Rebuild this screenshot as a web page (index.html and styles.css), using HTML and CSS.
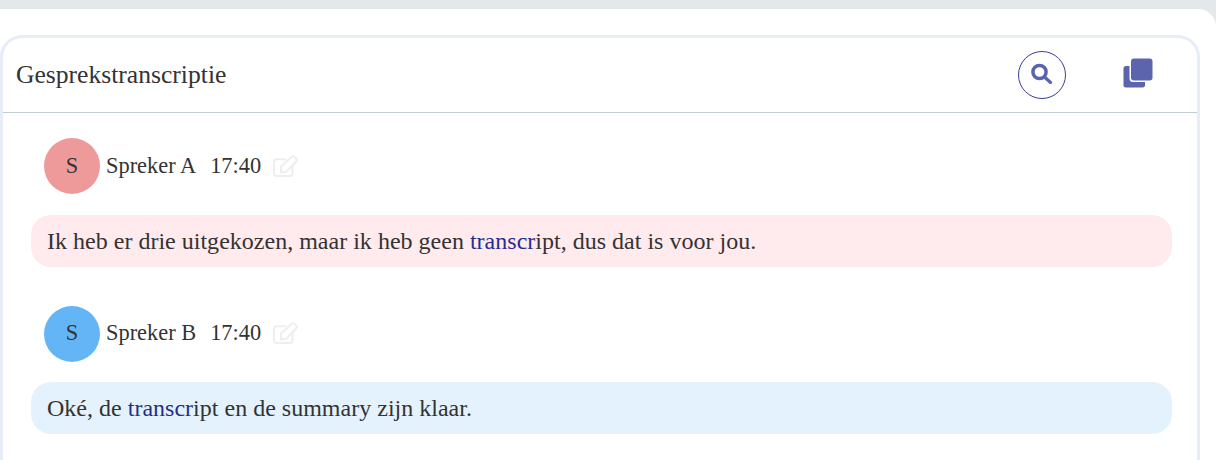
FILE: index.html
```html
<!DOCTYPE html>
<html lang="nl">
<head>
<meta charset="utf-8">
<title>Gesprekstranscriptie</title>
<link rel="stylesheet" href="styles.css">
</head>
<body>
<div class="sheet">
  <section class="card">
    <header class="card-head">
      <h2 class="title">Gesprekstranscriptie</h2>
      <div class="tools">
        <button class="search-btn" aria-label="Zoeken">
          <svg width="22" height="22" viewBox="0 0 22 22"><circle cx="8.500" cy="10" r="6.600" fill="none" stroke="#5b64ac" stroke-width="3.500"/><path d="M13.500 15l6 5.500" stroke="#5b64ac" stroke-width="3.200" stroke-linecap="round"/></svg>
        </button>
        <svg class="copy" width="30" height="30" viewBox="0 0 30 30"><path d="M3 8h3.500v12.500a3.500 3.500 0 0 0 3.500 3.500h12v3a2.500 2.500 0 0 1-2.500 2.500H3A2.500 2.500 0 0 1 .5 27V10.500A2.500 2.500 0 0 1 3 8z" fill="#5b64ac"/><rect x="8" y=".5" width="21.500" height="22" rx="3" fill="#5b64ac"/></svg>
      </div>
    </header>
    <div class="messages">
      <article class="msg">
        <div class="meta">
          <span class="avatar avatar-a">S</span>
          <span class="name">Spreker A</span>
          <span class="time">17:40</span>
          <svg class="edit" width="26" height="22" viewBox="0 0 26 22"><path d="M13 4.300H3.500A2.500 2.500 0 0 0 1 6.800V18.500A2.500 2.500 0 0 0 3.500 21h13.500a2.500 2.500 0 0 0 2.500-2.500V11" fill="none" stroke="#eeeeee" stroke-width="2"/><path d="M8 11.500L19 1.500q1-.8 2 0l2.500 2.500q.8 1 0 2L13 17l-5 .5z" fill="none" stroke="#eeeeee" stroke-width="2" stroke-linejoin="round"/></svg>
        </div>
        <p class="bubble bubble-a">Ik heb er drie uitgekozen, maar ik heb geen <span class="hit">transcr</span>ipt, dus dat is voor jou.</p>
      </article>
      <article class="msg">
        <div class="meta">
          <span class="avatar avatar-b">S</span>
          <span class="name">Spreker B</span>
          <span class="time">17:40</span>
          <svg class="edit" width="26" height="22" viewBox="0 0 26 22"><path d="M13 4.300H3.500A2.500 2.500 0 0 0 1 6.800V18.500A2.500 2.500 0 0 0 3.500 21h13.500a2.500 2.500 0 0 0 2.500-2.500V11" fill="none" stroke="#eeeeee" stroke-width="2"/><path d="M8 11.500L19 1.500q1-.8 2 0l2.500 2.500q.8 1 0 2L13 17l-5 .5z" fill="none" stroke="#eeeeee" stroke-width="2" stroke-linejoin="round"/></svg>
        </div>
        <p class="bubble bubble-b">Oké, de <span class="hit">transcr</span>ipt en de summary zijn klaar.</p>
      </article>
    </div>
  </section>
</div>
</body>
</html>
```
FILE: styles.css
```css
* { box-sizing: border-box; }
html, body { margin: 0; height: 460px; overflow: hidden; }
body {
  background: #e3e8ea;
  padding-top: 9px;
  font-family: "Liberation Serif", serif;
  color: #333;
}
.sheet {
  height: 451px;
  background: #fff;
  border-radius: 0 18px 0 0;
  padding: 26px 16px 0 0;
}
.card {
  height: 425px;
  border: 3px solid #e6ecf8;
  border-bottom: 0;
  border-radius: 22px 22px 0 0;
}
.card-head {
  height: 75px;
  display: flex;
  align-items: center;
  justify-content: space-between;
  padding: 0 44px 0 13px;
  border-bottom: 1px solid #c2cdd1;
}
.title { margin: 0; font-size: 25.6px; font-weight: 400; }
.tools { display: flex; align-items: center; gap: 57px; }
.search-btn {
  width: 48px;
  height: 48px;
  border: 1px solid #3a3f96;
  border-radius: 50%;
  background: #fff;
  padding: 0 0 4px;
  display: flex;
  align-items: center;
  justify-content: center;
}
.copy { margin-bottom: 4px; }
.messages { padding: 25px 25px 0 28px; display: flex; flex-direction: column; gap: 39px; }
.meta { display: flex; align-items: center; height: 56px; padding-left: 13px; font-size: 22.4px; }
.avatar {
  width: 56px;
  height: 56px;
  border-radius: 50%;
  display: flex;
  align-items: center;
  justify-content: center;
  margin-right: 6px;
}
.avatar-a { background: #ef9a9a; }
.avatar-b { background: #64b5f6; }
.time { margin-left: 14px; }
.edit { margin-left: 12px; }
.msg + .msg .avatar,
.msg + .msg .name,
.msg + .msg .time { padding-bottom: 2px; }
.msg + .msg .edit { margin-bottom: 2px; }
.bubble {
  margin: 21px 0 0;
  height: 52px;
  border-radius: 20px;
  padding: 0 16px;
  font-size: 24px;
  line-height: 52px;
  letter-spacing: .01px;
}
.bubble-a { background: #ffebee; }
.bubble-b { background: #e3f2fd; margin-top: 20px; }
.hit { color: #252e8e; }
```
